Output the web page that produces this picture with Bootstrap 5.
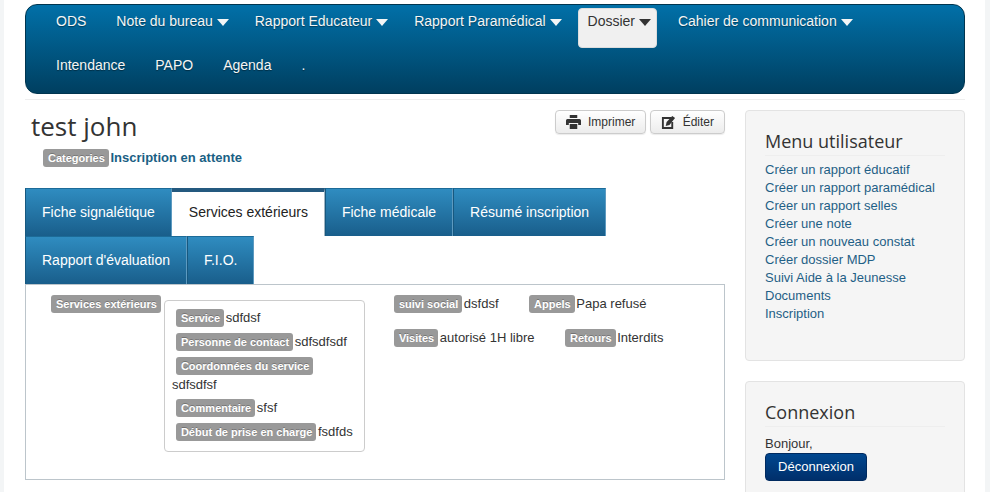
<!DOCTYPE html>
<html lang="fr">

<head>
    <meta charset="UTF-8">
    <meta name="viewport" content="width=device-width, initial-scale=1.0">
    <title>test john</title>
    <link rel="stylesheet" href="https://cdn.jsdelivr.net/npm/bootstrap@5.3.0/dist/css/bootstrap.min.css">
    <style>
        html, body {
            height: 492px;
            overflow: hidden;
        }

        body {
            background-color: #f3f5f6;
            color: #333;
            font-family: "Liberation Sans", Arial, sans-serif;
            font-size: 13px;
            line-height: 18px;
        }

        .page-wrap {
            background: #fff;
            margin: 0 5px 0 4px;
            padding: 4px 20px 0 21px;
            height: 492px;
            overflow: hidden;
        }

        .top-menu {
            background: linear-gradient(#0170a8, #003f60);
            border: 1px solid #00354f;
            border-radius: 12px;
            height: 90px;
            padding: 0 15px;
        }

        .top-menu a {
            color: #f4f6f6;
            font-size: 14px;
            text-decoration: none;
            display: block;
            height: 40px;
            margin: 3px 0 1px;
            padding: 3px 14px;
            border: 1px solid transparent;
            border-radius: 4px;
            line-height: 18px;
            text-shadow: 0 1px 1px rgba(0, 0, 0, .4);
        }

        .top-menu a.is-open {
            background: #f0f0f0;
            color: #333;
            border-color: #ddd;
            text-shadow: none;
            padding-left: 9px;
            padding-right: 9px;
            margin-left: 5px;
            margin-right: 6px;
        }

        .caret-down {
            display: inline-block;
            width: 0;
            height: 0;
            margin-right: -4px;
            vertical-align: 0;
            border-top: 7px solid currentColor;
            border-left: 6px solid transparent;
            border-right: 6px solid transparent;
        }

        .top-rule {
            border-top: 1px solid #eee;
            margin-top: 5px;
            height: 11px;
        }

        .main-col {
            width: 700px;
        }

        .side-col {
            width: 220px;
            margin-left: 20px;
        }

        .page-title {
            font-family: "Open Sans", sans-serif;
            font-size: 26px;
            font-weight: 400;
            line-height: 32px;
            margin: 0 0 0 6px;
            color: #333;
        }

        .tool-btn {
            background: linear-gradient(#fff, #ececec);
            border: 1px solid #ccc;
            border-radius: 4px;
            color: #333;
            font-size: 12px;
            line-height: 16px;
            padding: 3px 10px;
            height: 24px;
            white-space: nowrap;
            box-shadow: 0 1px 1px rgba(0, 0, 0, .08);
        }

        .tool-btn svg {
            margin-right: 4px;
            vertical-align: -3px;
        }

        .tool-btn:last-child svg {
            margin-right: 3px;
        }

        .gray-tag {
            display: inline-block;
            background: #999;
            color: #fff;
            border-radius: 3px;
            font-size: 11px;
            font-weight: 700;
            line-height: 14px;
            padding: 2px 4px 2px 5px;
            margin-right: -2px;
            height: 18px;
            vertical-align: baseline;
            text-shadow: 0 -1px 0 rgba(0, 0, 0, .25);
        }

        .cat-line {
            margin: 7px 0 0 18px;
            height: 18px;
        }

        .cat-line b {
            color: #1a5f84;
        }

        .tab-strip {
            margin-top: 21px;
            font-size: 14px;
        }

        .tab-strip a {
            display: block;
            height: 48px;
            padding: 14px 16px 0;
            color: #fff;
            background: linear-gradient(#2f8cc0, #195e8b);
            border-left: 1px solid #17587f;
            border-right: 1px solid #5d9ac0;
            border-top: 1px solid #1c6b98;
            text-decoration: none;
            line-height: 18px;
        }

        .tab-strip a.is-current {
            background: #fff;
            color: #222;
            border-top: 4px solid #24597f;
            border-left: 0;
            border-right: 1px solid #9fb4c2;
            padding-top: 11px;
            padding-left: 17px;
        }

        .tab-box {
            border: 1px solid #bcc5cb;
            height: 196px;
        }

        .tab-box-cols {
            padding: 10px 0 0 25px;
        }

        .svc-frame {
            border: 1px solid #ccc;
            border-radius: 4px;
            width: 201px;
            height: 152px;
            margin: 5px 0 0 5px;
            padding: 8px 0 0 7px;
        }

        .svc-frame p {
            margin: 0 0 6px;
            height: 18px;
        }

        .svc-frame .gray-tag {
            margin-left: 4px;
        }

        .svc-frame p.tall {
            height: 38px;
            margin-bottom: 4px;
        }

        .svc-frame p.tall span.next-line {
            display: block;
            margin-top: 1px;
        }

        .info-col {
            margin-left: 29px;
        }

        .info-row {
            gap: 30.5px;
            margin-bottom: 16px;
        }

        .side-col .side-box {
            background: #f5f5f5;
            border: 1px solid #e3e3e3;
            border-radius: 4px;
            padding: 17px 19px 0;
            margin-bottom: 20px;
        }

        .side-box h3 {
            font-family: "Open Sans", sans-serif;
            font-size: 18px;
            font-weight: 400;
            line-height: 26px;
            margin: 0;
            padding-bottom: 1px;
            border-bottom: 1px solid #eee;
            color: #333;
        }

        .side-box ul {
            list-style: none;
            margin: 5px 0 0;
            padding: 0;
        }

        .side-box li a {
            color: #1f5f86;
            text-decoration: none;
            display: block;
            height: 18px;
        }

        .box-menu {
            height: 251px;
        }

        .box-login {
            height: 140px;
        }

        .hello-line {
            margin-top: 8px;
        }

        .logout-btn {
            display: block;
            width: 102px;
            height: 28px;
            background: linear-gradient(#00478f, #002f6b);
            border: 1px solid #002a5f;
            border-radius: 4px;
            color: #fff;
            font-size: 13px;
            line-height: 26px;
            text-align: center;
            padding: 0;
        }
    </style>
</head>

<body>
    <div class="page-wrap">
        <nav class="top-menu d-flex flex-wrap align-content-start">
            <a href="#">ODS</a>
            <a href="#">Note du bureau <span class="caret-down"></span></a>
            <a href="#">Rapport Educateur <span class="caret-down"></span></a>
            <a href="#">Rapport Paramédical <span class="caret-down"></span></a>
            <a href="#" class="is-open">Dossier <span class="caret-down"></span></a>
            <a href="#">Cahier de communication <span class="caret-down"></span></a>
            <a href="#">Intendance</a>
            <a href="#">PAPO</a>
            <a href="#">Agenda</a>
            <a href="#">.</a>
        </nav>
        <div class="top-rule"></div>

        <div class="d-flex">
            <div class="main-col">
                <div class="d-flex justify-content-between align-items-start">
                    <h1 class="page-title">test john</h1>
                    <div class="d-flex gap-1">
                        <button class="tool-btn" type="button">
                            <svg width="15" height="14" viewBox="0 0 16 14" preserveAspectRatio="none"><path fill="#333" d="M4 0h8v3H4zM1.500 4h13A1.500 1.500 0 0 1 16 5.500V10h-3V8H3v2H0V5.500A1.500 1.500 0 0 1 1.500 4zM4 9h8v5H4z"/></svg>
                            Imprimer
                        </button>
                        <button class="tool-btn" type="button">
                            <svg width="15" height="14" viewBox="0 0 16 14" preserveAspectRatio="none"><path fill="none" stroke="#333" stroke-width="2" d="M11 3H2v10h10V7"/><path fill="#333" d="M6 7l6-6 3 2-6 7-4 1z"/></svg>
                            Éditer
                        </button>
                    </div>
                </div>
                <div class="cat-line"><span class="gray-tag">Categories</span> <b>Inscription en attente</b></div>

                <div class="tab-strip d-flex flex-wrap">
                    <a href="#">Fiche signalétique</a>
                    <a href="#" class="is-current">Services extérieurs</a>
                    <a href="#">Fiche médicale</a>
                    <a href="#">Résumé inscription</a>
                    <div class="w-100"></div>
                    <a href="#">Rapport d'évaluation</a>
                    <a href="#">F.I.O.</a>
                </div>
                <div class="tab-box">
                    <div class="tab-box-cols d-flex">
                        <div><span class="gray-tag">Services extérieurs</span></div>
                        <div class="svc-frame">
                            <p><span class="gray-tag">Service</span> sdfdsf</p>
                            <p><span class="gray-tag">Personne de contact</span> sdfsdfsdf</p>
                            <p class="tall"><span class="gray-tag">Coordonnées du service</span><span class="next-line">sdfsdfsf</span></p>
                            <p><span class="gray-tag">Commentaire</span> sfsf</p>
                            <p><span class="gray-tag">Début de prise en charge</span> fsdfds</p>
                        </div>
                        <div class="info-col">
                            <div class="info-row d-flex">
                                <span><span class="gray-tag">suivi social</span> dsfdsf</span>
                                <span><span class="gray-tag">Appels</span> Papa refusé</span>
                            </div>
                            <div class="info-row d-flex">
                                <span><span class="gray-tag">Visites</span> autorisé 1H libre</span>
                                <span><span class="gray-tag">Retours</span> Interdits</span>
                            </div>
                        </div>
                    </div>
                </div>
            </div>

            <aside class="side-col">
                <div class="side-box box-menu">
                    <h3>Menu utilisateur</h3>
                    <ul>
                        <li><a href="#">Créer un rapport éducatif</a></li>
                        <li><a href="#">Créer un rapport paramédical</a></li>
                        <li><a href="#">Créer un rapport selles</a></li>
                        <li><a href="#">Créer une note</a></li>
                        <li><a href="#">Créer un nouveau constat</a></li>
                        <li><a href="#">Créer dossier MDP</a></li>
                        <li><a href="#">Suivi Aide à la Jeunesse</a></li>
                        <li><a href="#">Documents</a></li>
                        <li><a href="#">Inscription</a></li>
                    </ul>
                </div>
                <div class="side-box box-login">
                    <h3>Connexion</h3>
                    <div class="hello-line">Bonjour,</div>
                    <button class="logout-btn" type="button">Déconnexion</button>
                </div>
            </aside>
        </div>
    </div>

    <script src="https://cdn.jsdelivr.net/npm/bootstrap@5.3.0/dist/js/bootstrap.bundle.min.js"></script>
</body>

</html>
